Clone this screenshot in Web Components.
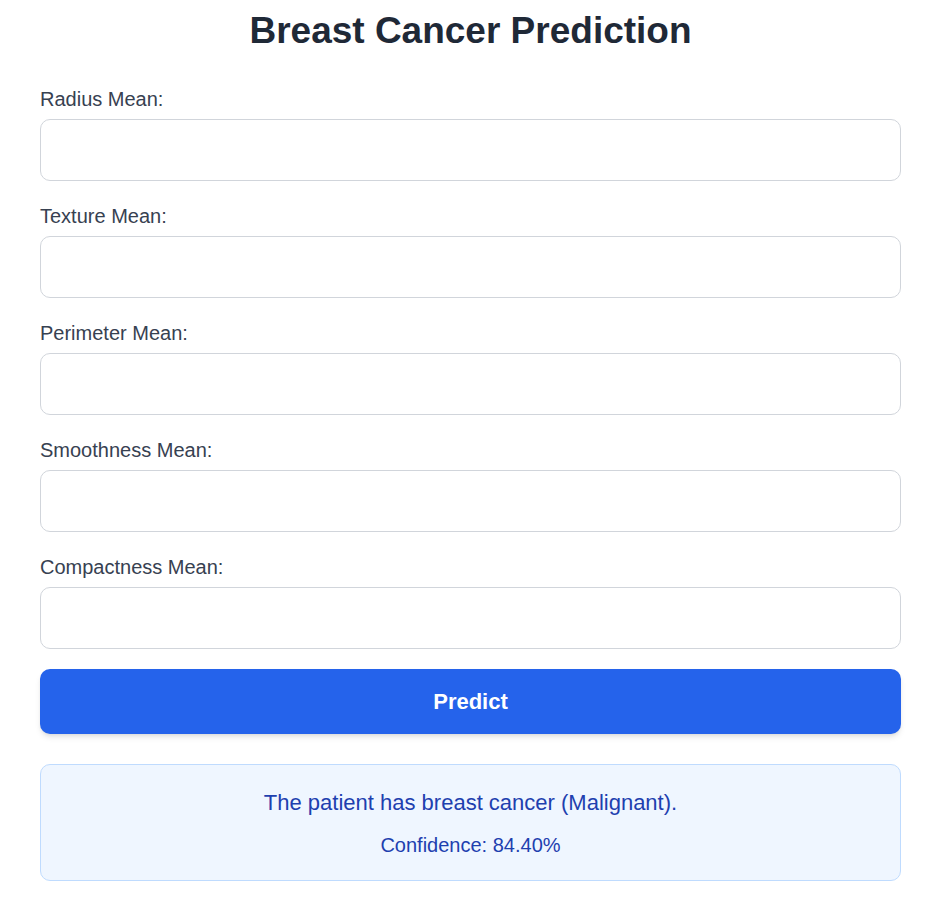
<!DOCTYPE html>
<html lang="en">
<head>
<meta charset="utf-8">
<meta name="viewport" content="width=device-width, initial-scale=1">
<title>Breast Cancer Prediction</title>
<style>
body { margin: 0; background: #fff; font-family: "Liberation Sans", Arial, sans-serif; }
</style>
</head>
<body>
<prediction-app></prediction-app>
<script>
class MeanField extends HTMLElement {
  constructor() {
    super();
    this.attachShadow({ mode: 'open' }).innerHTML = `
      <style>
        :host { display: block; }
        label { display: block; margin-bottom: 5px; font-size: 20px; line-height: 30px; color: #374151; }
        input { display: block; box-sizing: border-box; width: 100%; height: 62px; padding: 15px 20px;
          border: 1px solid #d1d5db; border-radius: 10px; background: #fff; color: #374151; font: inherit; font-size: 20px; }
        input:focus { outline: 2px solid #3b82f6; }
      </style>
      <label for="value"><slot></slot></label>
      <input id="value" type="text" inputmode="decimal">`;
  }
}
customElements.define('mean-field', MeanField);

class PredictButton extends HTMLElement {
  constructor() {
    super();
    this.attachShadow({ mode: 'open' }).innerHTML = `
      <style>
        :host { display: block; }
        button { display: block; width: 100%; padding: 15px 20px; border: 0; border-radius: 10px;
          background: #2563eb; color: #fff; font: inherit; font-size: 22px; font-weight: 700; line-height: 35px;
          box-shadow: 0 4px 6px -1px rgb(0 0 0 / .1), 0 2px 4px -2px rgb(0 0 0 / .1); cursor: pointer; }
        button:hover { background: #1d4ed8; }
      </style>
      <button type="submit"><slot></slot></button>`;
  }
}
customElements.define('predict-button', PredictButton);

class PredictionResult extends HTMLElement {
  constructor() {
    super();
    this.attachShadow({ mode: 'open' }).innerHTML = `
      <style>
        :host { display: block; padding: 20px; border: 1px solid #bfdbfe; border-radius: 10px;
          background: #eff6ff; color: #1e40af; text-align: center; }
        p { margin: 0; font-size: 22px; line-height: 35px; }
        p.confidence { margin-top: 10px; font-size: 20px; line-height: 30px; }
      </style>
      <p><slot></slot></p>
      <p class="confidence"><slot name="confidence"></slot></p>`;
  }
}
customElements.define('prediction-result', PredictionResult);

class PredictionApp extends HTMLElement {
  constructor() {
    super();
    this.attachShadow({ mode: 'open' }).innerHTML = `
      <style>
        :host { display: block; padding: 8px 31px 22px 40px; }
        h1 { margin: 0 0 30px; font-size: 37px; line-height: 46px; font-weight: 700; text-align: center; color: #1f2937; }
        form { display: flex; flex-direction: column; gap: 20px; }
        prediction-result { margin-top: 30px; }
      </style>
      <h1>Breast Cancer Prediction</h1>
      <form>
        <mean-field>Radius Mean:</mean-field>
        <mean-field>Texture Mean:</mean-field>
        <mean-field>Perimeter Mean:</mean-field>
        <mean-field>Smoothness Mean:</mean-field>
        <mean-field>Compactness Mean:</mean-field>
        <predict-button>Predict</predict-button>
      </form>
      <prediction-result>The patient has breast cancer (Malignant).<span slot="confidence">Confidence: 84.40%</span></prediction-result>`;
  }
}
customElements.define('prediction-app', PredictionApp);
</script>
</body>
</html>
